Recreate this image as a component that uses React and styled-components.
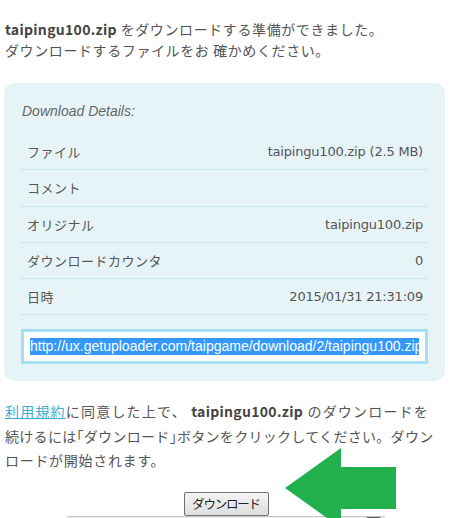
import React from "react";
import styled, { createGlobalStyle } from "styled-components";

const Global = createGlobalStyle`
  html, body { margin: 0; padding: 0; background: #fff; }
  body { font-family: "Noto Sans CJK JP", "Noto Sans", sans-serif; color: #555; overflow: hidden; }
`;

const Page = styled.div`
  position: relative;
  width: 451px;
  height: 518px;
  overflow: hidden;
`;

const Intro = styled.p`
  margin: 0;
  padding: 19px 5px 0;
  font-size: 14px;
  line-height: 21px;
  letter-spacing: 0.6px;
  white-space: nowrap;
`;

const Bold = styled.b`
  font-weight: 700;
  color: #444;
  letter-spacing: 0.3px;
`;

const Panel = styled.section`
  margin: 22px 6px 0 4px;
  padding: 18px 17px 17px;
  background: #e6f4f8;
  border-radius: 10px;
`;

const Title = styled.div`
  font-family: "Liberation Sans", Arial, sans-serif;
  font-style: italic;
  font-size: 14px;
  line-height: 20px;
  color: #666;
  padding-left: 1px;
  margin-bottom: 13px;
`;

const Row = styled.div`
  display: flex;
  justify-content: space-between;
  align-items: center;
  box-sizing: border-box;
  height: 36.25px;
  padding: 0 5px 0 6px;
  border-bottom: 1px solid #c4e7f1;
  font-family: "DejaVu Sans", "Noto Sans CJK JP", sans-serif;
  font-size: 13px;
  color: #555;
`;

const Label = styled.span`
  letter-spacing: 0.5px;
`;
const Value = styled.span`
  letter-spacing: -0.2px;
`;

const UrlBox = styled.div`
  margin-top: 14px;
  box-sizing: border-box;
  height: 35px;
  border: 3px solid #a6def3;
  background: #fff;
  display: flex;
  align-items: center;
  padding: 0 6px;
`;

const UrlText = styled.div`
  flex: 1;
  overflow: hidden;
  white-space: nowrap;
  display: flex;
`;

const Selected = styled.span`
  font-family: "Liberation Sans", Arial, sans-serif;
  font-size: 14px;
  line-height: 17px;
  background: #3399ff;
  color: #fff;
`;

const Terms = styled.p`
  margin: 18px 0 0 5px;
  font-size: 14px;
  line-height: 24.5px;
  white-space: nowrap;
`;

const Line = styled.span`
  display: block;
  letter-spacing: ${(p) => p.$spacing}px;
`;

const Bracket = styled.span`
  font-feature-settings: "halt";
`;

const Link = styled.a`
  color: #3aaed3;
  text-decoration: underline;
`;

const ButtonRow = styled.div`
  display: flex;
  justify-content: center;
  margin-top: 19px;
  padding-left: 1px;
`;

const Button = styled.button`
  width: 85px;
  height: 24px;
  border: 1px solid #707070;
  border-radius: 2px;
  background: linear-gradient(#f4f4f4, #dedede);
  font-family: "Noto Sans CJK JP", sans-serif;
  font-size: 12.5px;
  letter-spacing: -1.2px;
  color: #222;
  padding: 0;
  line-height: 20px;
`;

const AdBar = styled.div`
  margin: 0 66px 0 67px;
  height: 6px;
  border-top: 1px solid #c8c8c8;
  background: #efefef;
  display: flex;
  justify-content: flex-end;
  padding-right: 4px;
`;

const AdKnob = styled.div`
  width: 15px;
  height: 6px;
  background: #555;
  border-radius: 2px 2px 0 0;
`;

const Arrow = styled.svg`
  position: absolute;
  left: 0;
  top: 0;
  pointer-events: none;
`;

export default function App() {
  const rows = [
    ["ファイル", "taipingu100.zip (2.5 MB)"],
    ["コメント", ""],
    ["オリジナル", "taipingu100.zip"],
    ["ダウンロードカウンタ", "0"],
    ["日時", "2015/01/31 21:31:09"],
  ];
  return (
    <Page>
      <Global />
      <Intro>
        <Bold>taipingu100.zip</Bold> をダウンロードする準備ができました。
        <br />
        ダウンロードするファイルをお 確かめください。
      </Intro>
      <Panel>
        <Title>Download Details:</Title>
        {rows.map(([l, v]) => (
          <Row key={l}>
            <Label>{l}</Label>
            <Value>{v}</Value>
          </Row>
        ))}
        <UrlBox>
          <UrlText>
            <Selected>http://ux.getuploader.com/taipgame/download/2/taipingu100.zip</Selected>
          </UrlText>
        </UrlBox>
      </Panel>
      <Terms>
        <Line $spacing={1.2}>
          <Link href="#">利用規約</Link>に同意した上で、 <Bold>taipingu100.zip</Bold> のダウンロードを
        </Line>
        <Line $spacing={0.3}>
          続けるには<Bracket>「</Bracket>ダウンロード<Bracket>」</Bracket>ボタンをクリックしてください。ダウン
        </Line>
        <Line $spacing={0.7}>ロードが開始されます。</Line>
      </Terms>
      <ButtonRow>
        <Button>ダウンロード</Button>
      </ButtonRow>
      <AdBar>
        <AdKnob />
      </AdBar>
      <Arrow width="451" height="518" viewBox="0 0 451 518">
        <polygon
          points="285,488 341,448 341,467 396,467 396,509 341,509 341,528"
          fill="#22b14c"
        />
      </Arrow>
    </Page>
  );
}
